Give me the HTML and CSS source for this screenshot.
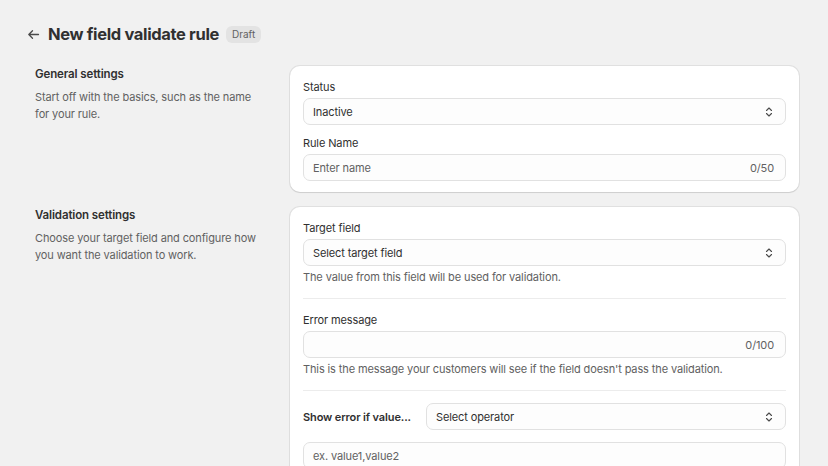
FILE: index.html
```html
<!DOCTYPE html>
<html lang="en">
<head>
    <meta charset="UTF-8">
    <meta name="viewport" content="width=device-width, initial-scale=1.0">
    <title>New field validate rule</title>
    <link rel="stylesheet" href="styles.css">
</head>
<body>
    <div class="page">
        <div class="page-header">
            <button class="back-btn" aria-label="Back">
                <svg width="13" height="13" viewBox="0 0 13 13"><path d="M11.5 6.5H1.8M5.5 2.8L1.8 6.5l3.7 3.7" fill="none" stroke="#4a4a4a" stroke-width="1.3" stroke-linecap="round" stroke-linejoin="round"/></svg>
            </button>
            <h1>New field validate rule</h1>
            <span class="badge">Draft</span>
        </div>

        <div class="section">
            <div class="section-info">
                <h2>General settings</h2>
                <p>Start off with the basics, such as the name for your rule.</p>
            </div>
            <div class="card">
                <div class="field">
                    <label>Status</label>
                    <div class="select">
                        <span>Inactive</span>
                        <svg class="chev" width="10" height="12" viewBox="0 0 10 12"><path d="M2.5 4.5L5 2l2.5 2.5M2.5 7.5L5 10l2.5-2.5" fill="none" stroke="#4a4a4a" stroke-width="1.1" stroke-linecap="round" stroke-linejoin="round"/></svg>
                    </div>
                </div>
                <div class="field">
                    <label>Rule Name</label>
                    <div class="input">
                        <span class="placeholder">Enter name</span>
                        <span class="counter">0/50</span>
                    </div>
                </div>
            </div>
        </div>

        <div class="section">
            <div class="section-info">
                <h2>Validation settings</h2>
                <p>Choose your target field and configure how you want the validation to work.</p>
            </div>
            <div class="card">
                <div class="field">
                    <label>Target field</label>
                    <div class="select">
                        <span>Select target field</span>
                        <svg class="chev" width="10" height="12" viewBox="0 0 10 12"><path d="M2.5 4.5L5 2l2.5 2.5M2.5 7.5L5 10l2.5-2.5" fill="none" stroke="#4a4a4a" stroke-width="1.1" stroke-linecap="round" stroke-linejoin="round"/></svg>
                    </div>
                    <p class="help">The value from this field will be used for validation.</p>
                </div>
                <hr class="divider">
                <div class="field">
                    <label>Error message</label>
                    <div class="input">
                        <span class="placeholder"></span>
                        <span class="counter">0/100</span>
                    </div>
                    <p class="help">This is the message your customers will see if the field doesn't pass the validation.</p>
                </div>
                <hr class="divider">
                <div class="inline-field">
                    <label>Show error if value...</label>
                    <div class="select">
                        <span>Select operator</span>
                        <svg class="chev" width="10" height="12" viewBox="0 0 10 12"><path d="M2.5 4.5L5 2l2.5 2.5M2.5 7.5L5 10l2.5-2.5" fill="none" stroke="#4a4a4a" stroke-width="1.1" stroke-linecap="round" stroke-linejoin="round"/></svg>
                    </div>
                </div>
                <div class="input values">
                    <span class="placeholder">ex. value1,value2</span>
                </div>
            </div>
        </div>
    </div>
</body>
</html>
```

FILE: styles.css
```css
* {
    box-sizing: border-box;
}
body {
    margin: 0;
    background-color: #f1f1f1;
    font-family: Inter, "Noto Sans", sans-serif;
    font-size: 11px;
    letter-spacing: -0.12px;
    color: #303030;
}
.page {
    width: 772px;
    margin-left: 27px;
    padding-top: 22px;
}
.page-header {
    display: flex;
    align-items: center;
    height: 24px;
    margin-bottom: 20px;
}
.back-btn {
    border: none;
    background: none;
    padding: 0;
    width: 13px;
    height: 14px;
    margin-right: 8px;
    display: flex;
    align-items: center;
}
h1 {
    margin: 0;
    font-size: 16.5px;
    font-weight: 650;
    letter-spacing: -0.35px;
    color: #303030;
}
.badge {
    margin-left: 7px;
    background: #e3e3e3;
    color: #616161;
    border-radius: 6px;
    font-size: 10px;
    letter-spacing: 0;
    padding: 2px 6px;
    line-height: 13px;
}
.section {
    display: grid;
    grid-template-columns: 263px 1fr;
    margin-bottom: 15px;
}
.section-info {
    padding-left: 8px;
    padding-top: 1px;
}
h2 {
    margin: 0 0 7px;
    font-size: 11.5px;
    font-weight: 600;
    line-height: 15px;
    color: #303030;
}
.section-info p {
    margin: 0;
    width: 228px;
    color: #616161;
    line-height: 17px;
}
.card {
    background: #fff;
    border-radius: 10px;
    box-shadow: 0 0 0 1px rgba(0,0,0,0.07), 0 1px 1px rgba(0,0,0,0.08);
    padding: 14px 13px 11px;
    display: flex;
    flex-direction: column;
    gap: 11px;
}
.field label,
.inline-field label {
    display: block;
    line-height: 14px;
    margin-bottom: 4px;
}
.select,
.input {
    height: 27px;
    border: 1px solid #e1e1e1;
    border-radius: 7px;
    background: #fdfdfd;
    display: flex;
    align-items: center;
    justify-content: space-between;
    padding: 0 10px 0 9px;
}
.chev {
    margin-right: 1px;
}
.placeholder {
    color: #616161;
}
.counter {
    color: #616161;
    margin-right: 1px;
}
.help {
    margin: 4px 0 0;
    color: #616161;
    line-height: 14px;
}
.divider {
    border: none;
    border-top: 1px solid #ececec;
    margin: 3px 0 3px;
}
.inline-field {
    display: flex;
    align-items: center;
    gap: 13px;
    margin-top: -2px;
}
.inline-field label {
    margin: 0;
    font-weight: 600;
    white-space: nowrap;
    width: 110px;
}
.inline-field .select {
    flex: 1;
}
.values {
    margin-top: 1px;
}
```
